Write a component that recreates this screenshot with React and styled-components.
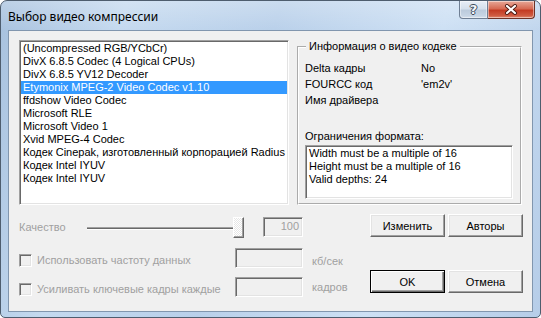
import React from 'react';
import styled, { createGlobalStyle } from 'styled-components';

const GlobalStyle = createGlobalStyle`
  html, body {
    margin: 0;
    padding: 0;
    background: #ffffff;
  }
  body {
    width: 541px;
    height: 318px;
    overflow: hidden;
  }
`;

const Window = styled.div`
  box-sizing: border-box;
  width: 541px;
  height: 318px;
  display: flex;
  flex-direction: column;
  padding: 0 7px 5px 7px;
  border: 1px solid #4e5d6e;
  border-radius: 7px 7px 5px 5px;
  background:
    linear-gradient(180deg, rgba(255, 255, 255, 0.25) 0%, rgba(255, 255, 255, 0) 30px),
    linear-gradient(105deg, #a7c1de 0%, #c4d9ef 20%, #b9d0ea 45%, #cde0f4 72%, #b6cde8 100%);
  font-family: "Liberation Sans", Arial, sans-serif;
`;

const TitleBar = styled.div`
  height: 29px;
  display: flex;
  align-items: flex-start;
  justify-content: space-between;
  margin-right: -2px;
`;

const Title = styled.div`
  padding: 8px 0 0 0;
  font-family: "Noto Sans", "Open Sans", sans-serif;
  font-size: 12px;
  line-height: 15px;
  color: #000;
`;

const CaptionButtons = styled.div`
  display: flex;
`;

const CaptionButton = styled.div`
  box-sizing: border-box;
  width: ${p => p.$w}px;
  height: 18px;
  display: flex;
  align-items: center;
  justify-content: center;
  border: 1px solid ${p => (p.$close ? '#6e3226' : '#6f7f94')};
  border-top: none;
  border-left: ${p => (p.$close ? 'none' : undefined)};
  border-radius: ${p => (p.$close ? '0 0 4px 0' : '0 0 0 4px')};
  background: ${p =>
    p.$close
      ? 'linear-gradient(180deg, #e7a898 0%, #d66a53 45%, #c33b23 55%, #cf5a40 85%, #e08a70 100%)'
      : 'linear-gradient(180deg, #e8eef6 0%, #d5e0ec 45%, #bccbdc 55%, #c6d4e4 85%, #d4dfeb 100%)'};
  box-shadow: inset 0 0 0 1px rgba(255, 255, 255, 0.45);
`;

const HelpGlyph = styled.span`
  font-family: "DejaVu Sans", sans-serif;
  font-weight: bold;
  font-size: 13px;
  line-height: 13px;
  color: #f3f6fa;
  text-shadow:
    1px 0 0 #3d4a5a, -1px 0 0 #3d4a5a, 0 1px 0 #3d4a5a, 0 -1px 0 #3d4a5a;
`;

const Client = styled.div`
  flex: 1;
  display: flex;
  flex-direction: column;
  background: #f0f0f0;
  border: 1px solid #8196ae;
  padding: 9px 0 0 10px;
  font-size: 11px;
  line-height: 13px;
  color: #000;
`;

const TopRow = styled.div`
  display: flex;
  height: 165px;
`;

const sunken = `
  box-sizing: border-box;
  border-style: solid;
  border-width: 1px;
  border-color: #a0a0a0 #ffffff #ffffff #a0a0a0;
  box-shadow: inset 1px 1px 0 #696969, inset -1px -1px 0 #e3e3e3;
`;

const ListBox = styled.div`
  ${sunken}
  width: 270px;
  height: 165px;
  padding: 1px;
  background: #ffffff;
  overflow: hidden;
`;

const ListItem = styled.div`
  padding-left: 2px;
  height: 13px;
  white-space: nowrap;
  background: ${p => (p.$selected ? '#3399ff' : 'transparent')};
  color: ${p => (p.$selected ? '#ffffff' : '#000000')};
`;

const GroupBox = styled.fieldset`
  box-sizing: border-box;
  margin: 0 0 0 8px;
  width: 225px;
  height: 165px;
  border: 2px groove #ffffff;
  padding: 0 7px 0 6px;
  min-width: 0;
`;

const Legend = styled.legend`
  padding: 0 3px;
  margin-left: 1px;
  line-height: 13px;
`;

const InfoGrid = styled.div`
  display: grid;
  grid-template-columns: 116px 1fr;
  grid-auto-rows: 16px;
  margin-top: 9px;
`;

const SectionLabel = styled.div`
  margin-top: 20px;
`;

const TextBox = styled.div`
  ${sunken}
  margin-top: 2px;
  width: 208px;
  height: 54px;
  padding: 1px 3px;
  background: #ffffff;
`;

const Row = styled.div`
  display: flex;
  align-items: flex-start;
  height: ${p => p.$h}px;
  margin-top: ${p => p.$mt}px;
`;

const DisabledText = styled.div`
  color: #a0a0a0;
  white-space: nowrap;
  margin-top: ${p => p.$mt || 0}px;
  width: ${p => (p.$w ? `${p.$w}px` : 'auto')};
  margin-left: ${p => p.$ml || 0}px;
`;

const Slider = styled.div`
  width: 157px;
  display: flex;
  align-items: flex-start;
`;

const Track = styled.div`
  flex: 1;
  height: 2px;
  margin-top: 13px;
  border-top: 1px solid #a0a0a0;
  border-bottom: 1px solid #ffffff;
  box-sizing: border-box;
  background: #696969;
  height: 3px;
`;

const Thumb = styled.div`
  box-sizing: border-box;
  width: 11px;
  height: 21px;
  margin-top: 3px;
  border-style: solid;
  border-width: 1px;
  border-color: #ffffff #696969 #696969 #ffffff;
  box-shadow: inset -1px -1px 0 #a0a0a0;
  background-color: #f6f6f6;
  background-image: repeating-conic-gradient(#ffffff 0 25%, #e6e6e6 0 50%);
  background-size: 2px 2px;
`;

const Edit = styled.div`
  ${sunken}
  width: ${p => p.$w}px;
  height: ${p => p.$h}px;
  margin-top: ${p => p.$mt || 0}px;
  margin-left: ${p => p.$ml || 0}px;
  background: #f0f0f0;
  color: #a0a0a0;
  text-align: right;
  padding: 2px 3px 0 0;
`;

const CheckLabel = styled.label`
  width: 216px;
  display: flex;
  align-items: flex-start;
  color: #a0a0a0;
  white-space: nowrap;
`;

const CheckBox = styled.span`
  ${sunken}
  display: block;
  width: 13px;
  height: 13px;
  margin-top: ${p => p.$mt}px;
  margin-right: 5px;
  background: #f0f0f0;
`;

const CheckText = styled.span`
  margin-top: ${p => p.$mt}px;
`;

const ButtonGroup = styled.div`
  display: flex;
  gap: 3px;
  margin-left: ${p => p.$ml || 0}px;
`;

const Button = styled.button`
  box-sizing: border-box;
  width: 75px;
  height: 23px;
  padding: 0;
  font-family: "Liberation Sans", Arial, sans-serif;
  font-size: 11px;
  color: #000;
  background: #f0f0f0;
  border-style: solid;
  border-width: 1px;
  border-color: ${p => (p.$default ? '#000000' : '#ffffff #696969 #696969 #ffffff')};
  box-shadow: ${p =>
    p.$default
      ? 'inset 1px 1px 0 #ffffff, inset -1px -1px 0 #696969, inset -2px -2px 0 #a0a0a0'
      : 'inset -1px -1px 0 #a0a0a0, inset 1px 1px 0 #e3e3e3'};
`;

const codecs = [
  '(Uncompressed RGB/YCbCr)',
  'DivX 6.8.5 Codec (4 Logical CPUs)',
  'DivX 6.8.5 YV12 Decoder',
  'Etymonix MPEG-2 Video Codec v1.10',
  'ffdshow Video Codec',
  'Microsoft RLE',
  'Microsoft Video 1',
  'Xvid MPEG-4 Codec',
  'Кодек Cinepak, изготовленный корпорацией Radius',
  'Кодек Intel IYUV',
  'Кодек Intel IYUV',
];

const CloseIcon = () => (
  <svg width="14" height="11" viewBox="0 0 14 11">
    <path d="M3 2 L11 9 M11 2 L3 9" stroke="#4a1a12" strokeWidth="4" strokeLinecap="round" fill="none" />
    <path d="M3 2 L11 9 M11 2 L3 9" stroke="#ffffff" strokeWidth="2.2" strokeLinecap="round" fill="none" />
  </svg>
);

const App = () => (
  <>
    <GlobalStyle />
    <Window>
      <TitleBar>
        <Title>Выбор видео компрессии</Title>
        <CaptionButtons>
          <CaptionButton $w={29}>
            <HelpGlyph>?</HelpGlyph>
          </CaptionButton>
          <CaptionButton $w={47} $close>
            <CloseIcon />
          </CaptionButton>
        </CaptionButtons>
      </TitleBar>
      <Client>
        <TopRow>
          <ListBox>
            {codecs.map((c, i) => (
              <ListItem key={i} $selected={i === 3}>{c}</ListItem>
            ))}
          </ListBox>
          <GroupBox>
            <Legend>Информация о видео кодеке</Legend>
            <InfoGrid>
              <div>Delta кадры</div>
              <div>No</div>
              <div>FOURCC код</div>
              <div>'em2v'</div>
              <div>Имя драйвера</div>
              <div></div>
            </InfoGrid>
            <SectionLabel>Ограничения формата:</SectionLabel>
            <TextBox>
              <div>Width must be a multiple of 16</div>
              <div>Height must be a multiple of 16</div>
              <div>Valid depths: 24</div>
            </TextBox>
          </GroupBox>
        </TopRow>

        <Row $h={24} $mt={9}>
          <DisabledText $w={68} $mt={7}>Качество</DisabledText>
          <Slider>
            <Track />
            <Thumb />
          </Slider>
          <Edit $w={40} $h={20} $mt={3} $ml={19}>100</Edit>
          <ButtonGroup $ml={67}>
            <Button>Изменить</Button>
            <Button>Авторы</Button>
          </ButtonGroup>
        </Row>

        <Row $h={20} $mt={10}>
          <CheckLabel>
            <CheckBox $mt={6} />
            <CheckText $mt={6}>Использовать частоту данных</CheckText>
          </CheckLabel>
          <Edit $w={68} $h={20} />
          <DisabledText $ml={9} $mt={7}>кб/сек</DisabledText>
        </Row>

        <Row $h={27} $mt={2}>
          <CheckLabel>
            <CheckBox $mt={13} />
            <CheckText $mt={13}>Усиливать ключевые кадры каждые</CheckText>
          </CheckLabel>
          <Edit $w={68} $h={20} $mt={7} />
          <DisabledText $w={58} $ml={9} $mt={11}>кадров</DisabledText>
          <ButtonGroup>
            <Button $default>OK</Button>
            <Button>Отмена</Button>
          </ButtonGroup>
        </Row>
      </Client>
    </Window>
  </>
);

export default App;
